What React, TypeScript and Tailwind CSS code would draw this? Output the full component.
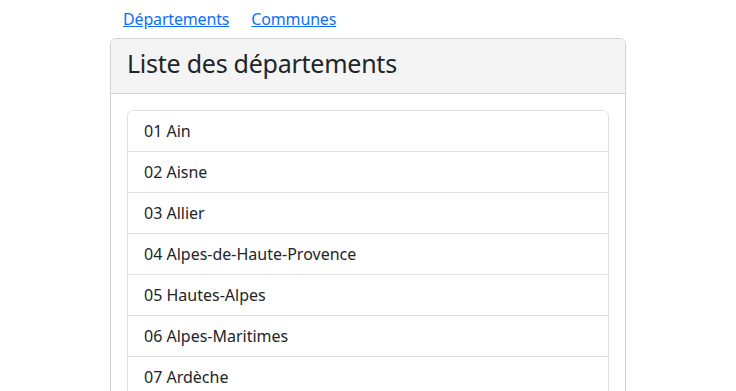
import React from 'react';

const departements = [
  '01 Ain',
  '02 Aisne',
  '03 Allier',
  '04 Alpes-de-Haute-Provence',
  '05 Hautes-Alpes',
  '06 Alpes-Maritimes',
  '07 Ardèche',
  '08 Ardennes',
  '09 Ariège',
];

export default function App() {
  return (
    <div className="min-h-screen bg-white text-[#212529] font-['Noto_Sans',sans-serif] text-base">
      <div className="w-[516px] mx-auto">
        <nav className="flex items-center h-[38px] pl-[13px] gap-[22px] tracking-[-0.01em]">
          <a href="#" className="text-[#0d6efd] underline">Départements</a>
          <a href="#" className="text-[#0d6efd] underline">Communes</a>
        </nav>
        <div className="border border-[#d3d3d3] rounded-[6px] overflow-hidden">
          <div className="bg-[#f4f4f4] border-b border-[#d3d3d3] h-[55px] px-4 pb-[6px] flex items-center">
            <h3 className="text-[25px] leading-[1.2] font-normal tracking-[-0.01em]">Liste des départements</h3>
          </div>
          <div className="p-4">
            <ul className="border border-[#dee2e6] rounded-[6px]">
              {departements.map((d, i) => (
                <li key={d} className={`px-4 py-2 leading-6 ${i > 0 ? 'border-t border-[#dee2e6]' : ''}`}>
                  {d}
                </li>
              ))}
            </ul>
          </div>
        </div>
      </div>
    </div>
  );
}
